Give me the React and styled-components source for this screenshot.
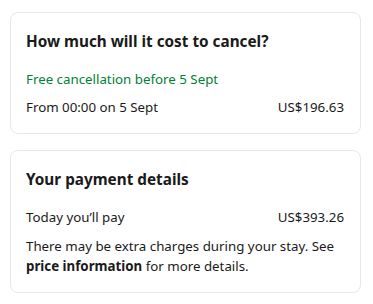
import React from "react";
import styled, { createGlobalStyle } from "styled-components";

const Global = createGlobalStyle`
  html, body { margin: 0; padding: 0; background: #ffffff; }
  body { font-family: "Noto Sans", "Open Sans", sans-serif; color: #1a1a1a; }
  * { box-sizing: border-box; }
`;

const Page = styled.div`
  width: 373px;
  padding: 12px 12px 0 10px;
  display: flex;
  flex-direction: column;
  gap: 16px;
`;

const Card = styled.section`
  border: 1px solid #e7e7e7;
  border-radius: 8px;
  padding: 16px 16px 16px 15px;
  display: flex;
  flex-direction: column;
`;

const Title = styled.h2`
  margin: 0 0 16px;
  font-size: 15.3px;
  line-height: 24px;
  font-weight: 700;
  color: #1a1a1a;
`;

const Note = styled.p`
  margin: ${(p) => p.$margin || "0 0 8px"};
  font-size: 13.3px;
  line-height: 20px;
  color: ${(p) => p.$color || "#1a1a1a"};
`;

const Row = styled.div`
  display: flex;
  justify-content: space-between;
  align-items: center;
  font-size: 13.3px;
  line-height: 20px;
  margin: ${(p) => p.$margin || "0"};
`;

const Strong = styled.strong`
  font-weight: 700;
`;

export default function App() {
  return (
    <>
      <Global />
      <Page>
        <Card>
          <Title>How much will it cost to cancel?</Title>
          <Note $color="#008234">Free cancellation before 5 Sept</Note>
          <Row>
            <span>From 00:00 on 5 Sept</span>
            <span>US$196.63</span>
          </Row>
        </Card>
        <Card>
          <Title>Your payment details</Title>
          <Row $margin="0 0 9px">
            <span>Today you’ll pay</span>
            <span>US$393.26</span>
          </Row>
          <Note $margin="0">
            There may be extra charges during your stay. See{" "}
            <Strong>price information</Strong> for more details.
          </Note>
        </Card>
      </Page>
    </>
  );
}
